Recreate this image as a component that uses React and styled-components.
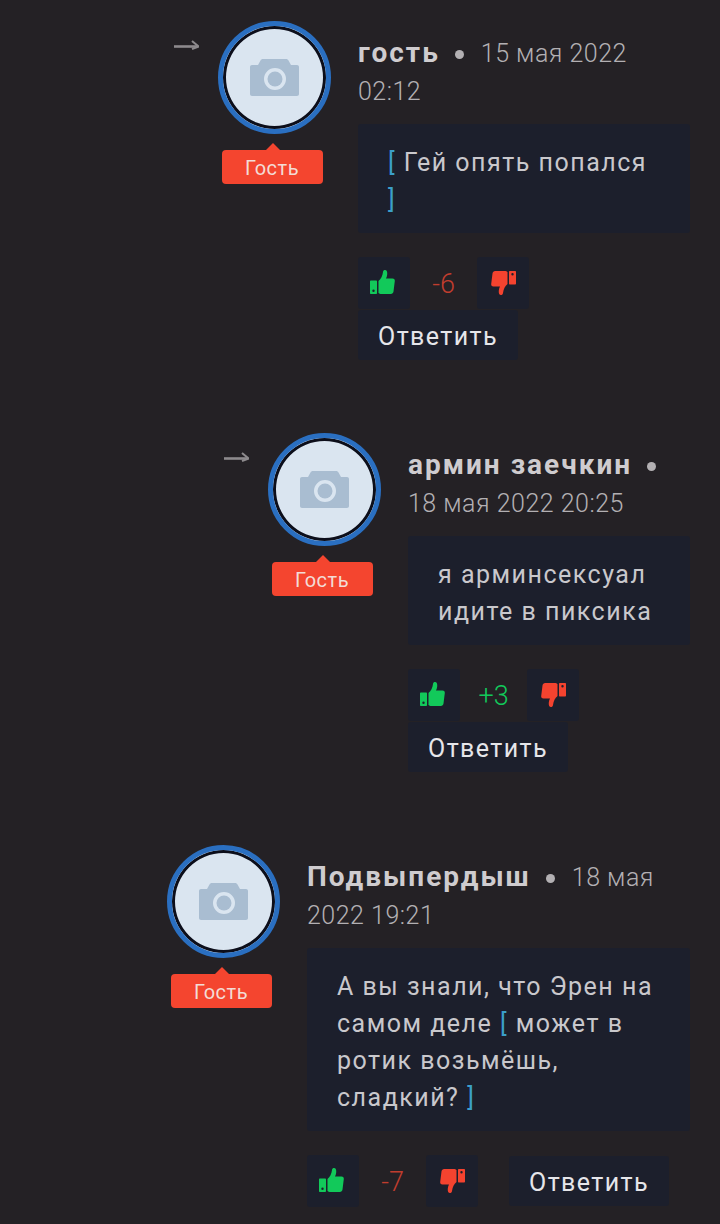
import React from 'react'
import styled, { createGlobalStyle } from 'styled-components'

const Bracket = styled.span`
  color: #3b9fc9;
`

const comments = [
  {
    id: 1,
    indent: 174,
    nested: true,
    name: 'гость',
    date: '15 мая 2022 02:12',
    body: (
      <>
        <Bracket>[</Bracket> Гей опять попался <Bracket>]</Bracket>
      </>
    ),
    score: '-6',
  },
  {
    id: 2,
    indent: 224,
    nested: true,
    name: 'армин заечкин',
    date: '18 мая 2022 20:25',
    body: 'я арминсексуал идите в пиксика',
    score: '+3',
  },
  {
    id: 3,
    indent: 167,
    name: 'Подвыпердыш',
    date: '18 мая 2022 19:21',
    body: (
      <>
        А вы знали, что Эрен на самом деле <Bracket>[</Bracket> может в ротик возьмёшь, сладкий?{' '}
        <Bracket>]</Bracket>
      </>
    ),
    score: '-7',
    inlineReply: true,
  },
]

const Thumb = ({ color, down }) => (
  <ThumbIcon $down={down} width="25" height="24" viewBox="0 0 25 24">
    <path
      fill={color}
      fillRule="evenodd"
      d="M1 10.500h5c.6 0 1 .4 1 1V23c0 .6-.4 1-1 1H1c-.6 0-1-.4-1-1V11.500c0-.6.4-1 1-1zM3.500 19.500a1.200 1.200 0 1 0 0 2.400a1.200 1.200 0 0 0 0-2.400z"
    />
    <path
      fill={color}
      d="M8.500 11C11 9 12.500 6 13 2c.2-1.500 1-2 2-2 1.800 0 2.500 2 2.200 4.500-.2 1.500-.6 3-1.200 4h6.500c1.700 0 2.500 1 2.300 2.500l-1.300 10.500c-.2 1.500-1.200 2.500-2.700 2.500h-9.300c-1.500 0-2.500-.5-3-1z"
    />
  </ThumbIcon>
)

const Camera = () => (
  <svg width="49" height="37" viewBox="0 0 49 37">
    <path
      fill="#a9bdd1"
      fillRule="evenodd"
      d="M2 6h6l2.500-4.500C11 .5 11.800 0 13 0h23c1.200 0 2 .5 2.500 1.500L41 6h6c1.100 0 2 .9 2 2v27c0 1.100-.9 2-2 2H2c-1.100 0-2-.9-2-2V8c0-1.100.9-2 2-2zM25 9a11 11 0 1 0 0 22a11 11 0 0 0 0-22z"
    />
    <circle cx="25" cy="20" r="7.500" fill="#a9bdd1" />
  </svg>
)

const Arrow = () => (
  <svg width="25" height="12" viewBox="0 0 25 12">
    <path d="M0 6.500h23" stroke="#8d8a8d" strokeWidth="2.600" fill="none" />
    <path d="M18 1l6.500 5.500L18 9" stroke="#8d8a8d" strokeWidth="2" fill="none" />
  </svg>
)

const App = () => {
  return (
    <Page>
      <GlobalStyle />
      {comments.map((c) => (
        <Comment key={c.id} $indent={c.indent}>
          {c.nested && (
            <NestArrow>
              <Arrow />
            </NestArrow>
          )}
          <AvatarColumn>
            <Avatar>
              <Camera />
            </Avatar>
            <GuestTag>Гость</GuestTag>
          </AvatarColumn>
          <Content>
            <Header>
              <Name>{c.name}</Name>
              <Dot />
              <DateText>{c.date}</DateText>
            </Header>
            <Bubble>{c.body}</Bubble>
            <Actions $inline={c.inlineReply}>
              <Votes>
                <VoteButton>
                  <Thumb color="#12c95a" />
                </VoteButton>
                <Score $positive={c.score[0] === '+'}>{c.score}</Score>
                <VoteButton>
                  <Thumb color="#f4432f" down />
                </VoteButton>
              </Votes>
              <Reply>Ответить</Reply>
            </Actions>
          </Content>
        </Comment>
      ))}
    </Page>
  )
}

const GlobalStyle = createGlobalStyle`
  html, body {
    margin: 0;
    background: #242125;
  }
`

const Page = styled.div`
  height: 1224px;
  box-sizing: border-box;
  padding: 21px 30px 0 0;
  overflow: hidden;
  background: #242125;
  font-family: Roboto, "Noto Sans", sans-serif;
  display: flex;
  flex-direction: column;
  gap: 73px;
`

const Comment = styled.div`
  display: flex;
  align-items: flex-start;
  padding-left: ${(p) => p.$indent}px;
`

const NestArrow = styled.div`
  width: 25px;
  height: 12px;
  margin: 19px 19px 0 0;
  display: flex;
`

const AvatarColumn = styled.div`
  width: 113px;
  flex: none;
  display: flex;
  flex-direction: column;
  align-items: center;
  margin-right: 27px;
`

const Avatar = styled.div`
  width: 113px;
  height: 113px;
  box-sizing: border-box;
  border-radius: 50%;
  border: 5px solid #2a6fc1;
  box-shadow: inset 0 0 0 3px #0c0e1a;
  background: #dae5f0;
  display: flex;
  align-items: center;
  justify-content: center;
`

const GuestTag = styled.div`
  position: relative;
  width: 101px;
  height: 34px;
  margin: 16px 5px 0 0;
  border-radius: 4px;
  background: #f4452f;
  color: #f3dcd6;
  font-size: 20px;
  letter-spacing: 0.5px;
  line-height: 36px;
  text-align: center;

  &::before {
    content: '';
    position: absolute;
    left: 44px;
    top: -7px;
    border-left: 7px solid transparent;
    border-right: 7px solid transparent;
    border-bottom: 7px solid #f4452f;
  }
`

const Content = styled.div`
  flex: 1;
  min-width: 0;
  padding-top: 14px;
`

const Header = styled.div`
  line-height: 38px;
  color: #b3b0b3;
  font-size: 25px;
`

const Name = styled.span`
  color: #cfcccf;
  font-weight: 700;
  font-size: 28px;
  line-height: 1;
  letter-spacing: 2px;
`

const Dot = styled.span`
  display: inline-block;
  width: 9px;
  height: 9px;
  margin: 0 17px 0 15px;
  border-radius: 50%;
  background: #b3b0b3;
  vertical-align: 3px;
`

const DateText = styled.span`
  font-weight: 300;
  letter-spacing: 0.5px;
`

const Bubble = styled.div`
  margin-top: 13px;
  padding: 20px 30px 15px;
  border-radius: 3px;
  background: #1c1f2c;
  color: #c9c8cc;
  font-size: 25px;
  line-height: 37px;
  letter-spacing: 1.5px;
`

const Actions = styled.div`
  display: flex;
  flex-direction: ${(p) => (p.$inline ? 'row' : 'column')};
  align-items: ${(p) => (p.$inline ? 'center' : 'flex-start')};
  gap: ${(p) => (p.$inline ? '31px' : '1px')};
  margin-top: 24px;
`

const Votes = styled.div`
  display: flex;
  align-items: center;
`

const VoteButton = styled.div`
  width: 52px;
  height: 52px;
  display: flex;
  align-items: center;
  justify-content: center;
  border-radius: 3px;
  background: #1c1f2c;
`

const ThumbIcon = styled.svg`
  transform: ${(p) => (p.$down ? 'rotate(180deg)' : 'none')};
  margin: ${(p) => (p.$down ? '0' : '-3px 3px 0 0')};
`

const Score = styled.div`
  width: 67px;
  padding-top: 2px;
  text-align: center;
  font-size: 27px;
  font-weight: 300;
  color: ${(p) => (p.$positive ? '#12c95a' : '#c03d2e')};
`

const Reply = styled.div`
  width: 160px;
  height: 50px;
  border-radius: 3px;
  background: #1c1f2c;
  color: #e6e6ea;
  font-size: 25px;
  line-height: 53px;
  letter-spacing: 1.4px;
  text-align: center;
`

export default App
